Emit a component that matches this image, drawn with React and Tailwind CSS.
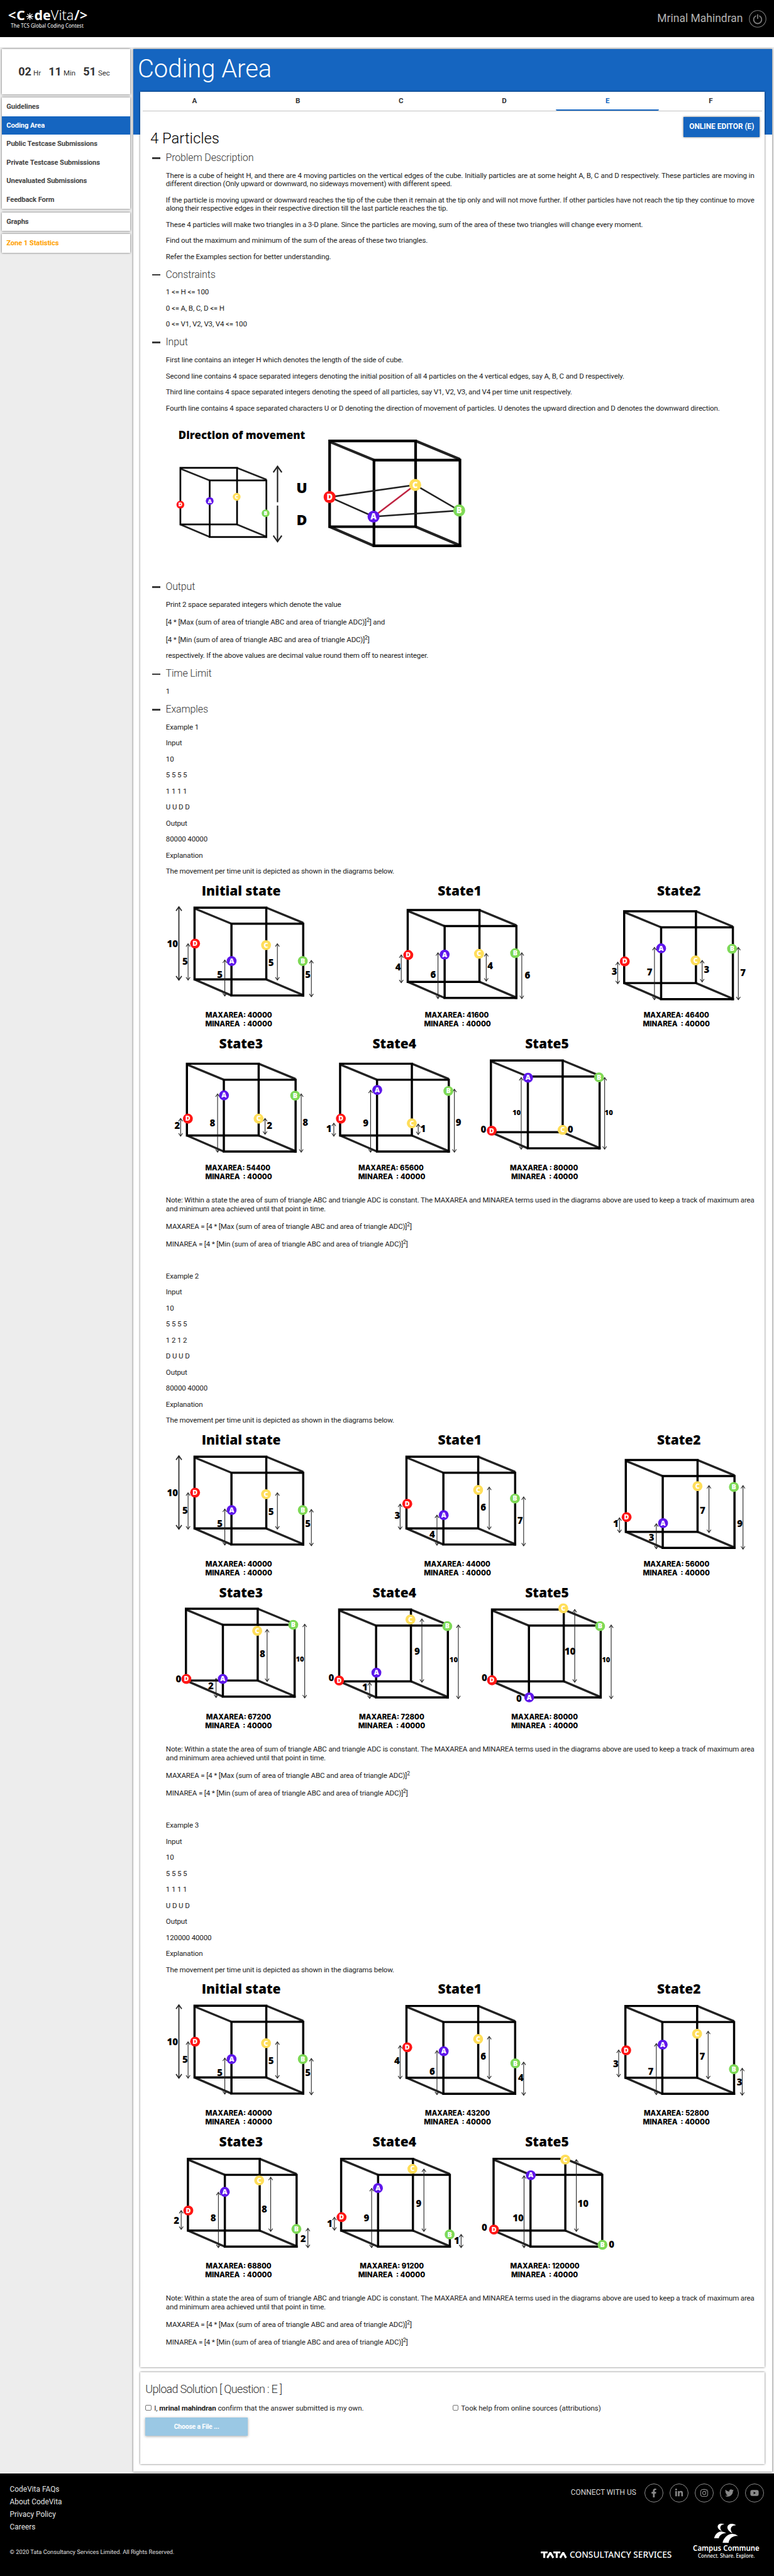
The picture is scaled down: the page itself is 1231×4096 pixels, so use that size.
import { FaFacebookF, FaLinkedinIn, FaInstagram, FaTwitter, FaYoutube } from "react-icons/fa";

const COLORS = { A: "#5e17eb", B: "#7ed957", C: "#ffde59", D: "#ff1616" };

/* ---------- diagrams ---------- */

function Cube({ x, y, w = 178, h = 178, dx = 91.6, dy = 39.8, sw = 5.4 }) {
  return (
    <g strokeWidth={sw} fill="none">
      <g stroke="#222">
        <path d={`M${x} ${y + 2}L${x + dx} ${y + dy}M${x + w} ${y}L${x + w + dx} ${y + dy - 2}`} />
        <path d={`M${x} ${y + h}L${x + dx} ${y + h + dy}M${x + w} ${y + h}L${x + w + dx} ${y + h + dy - 1}`} />
      </g>
      <path stroke="#000" d={`M${x} ${y + h}V${y}H${x + w}V${y + h}H${x - sw / 2}M${x - sw / 2} ${y}H${x + 2}`} />
      <path stroke="#000" d={`M${x + dx} ${y + dy}H${x + w + dx}V${y + h + dy}H${x + dx}V${y + dy - sw / 2}`} />
      <path stroke="#000" d={`M${x + w + dx - 4} ${y + h + dy}H${x + w + dx + sw / 2}`} />
    </g>
  );
}

function Marker({ id, x, y, r = 12.3 }) {
  return (
    <g>
      <circle cx={x} cy={y} r={r} fill={COLORS[id]} />
      <text x={x} y={y + r * 0.47} textAnchor="middle" fill="#fff" fontSize={r * 1.38} fontWeight="800">
        {id}
      </text>
    </g>
  );
}

function Arrow({ x, y1, y2, sw = 1.7, head = 5, up = true, down = true }) {
  return (
    <g stroke="#222" strokeWidth={sw} fill="none">
      <path d={`M${x} ${y1}V${y2}`} />
      {up && <path d={`M${x - head} ${y1 + head * 1.4}L${x} ${y1}L${x + head} ${y1 + head * 1.4}`} />}
      {down && <path d={`M${x - head} ${y2 - head * 1.4}L${x} ${y2}L${x + head} ${y2 - head * 1.4}`} />}
    </g>
  );
}

function Num({ x, y, size = 23.5, children }) {
  return (
    <text x={x} y={y + size * 0.357} textAnchor="middle" fontSize={size} fontWeight="800" fill="#000">
      {children}
    </text>
  );
}

function Area({ x1, x2, y, children }) {
  return (
    <text
      x={x1}
      y={y}
      textLength={x2 - x1}
      lengthAdjust="spacingAndGlyphs"
      fontSize="18"
      fontWeight="800"
      className="whitespace-pre font-['Inter',sans-serif]"
    >
      {children}
    </text>
  );
}

/* marks: [id, x, y, arrow [x, y1, y2] or null, label [x, y, text, size]] */
function State({ title, tx, o, marks, max, min, colon = ":", row }) {
  const ty = row === 0 ? 29.9 : 409.3;
  const ay = row === 0 ? 332.7 : 711.4;
  return (
    <g>
      <text x={tx} y={ty} textAnchor="middle" fontSize="32.6" fontWeight="800">
        {title}
      </text>
      <Cube x={o[0]} y={o[1]} />
      {marks.map(([id, x, y, a, l]) => (
        <g key={id}>
          {a && <Arrow x={a[0]} y1={a[1]} y2={a[2]} />}
          <Marker id={id} x={x} y={y} />
          <Num x={l[0]} y={l[1]} size={l[3]}>
            {l[2]}
          </Num>
        </g>
      ))}
      <Area x1={max[0]} x2={max[1]} y={ay}>{`MAXAREA${colon} ${max[2]}`}</Area>
      <Area x1={min[0]} x2={min[1]} y={ay + 20.9}>{"MINAREA  : 40000"}</Area>
    </g>
  );
}

const INITIAL = {
  title: "Initial state", tx: 186.6, o: [70.8, 59.6], row: 0,
  max: [97.9, 263.2, "40000"], min: [97.4, 263.4],
  marks: [
    ["D", 72.2, 148.7, [54.8, 149.2, 239.2], [47.5, 193, "5"]],
    ["A", 162.8, 192, [145.9, 189.5, 279], [133.8, 224.8, "5"]],
    ["C", 248.2, 152.6, [276.3, 149.2, 239.2], [260.8, 195.4, "5"]],
    ["B", 339.3, 192, [360.6, 190.4, 280.5], [351.9, 224.8, "5"]],
  ],
};

const FIG1 = [
  {
    title: "State1", tx: 728.3, o: [599.6, 65.6], row: 0, max: [642.2, 800.7, "41600"], min: [640.3, 806],
    marks: [
      ["D", 601, 177, [583.6, 177, 245.7], [575.8, 206.9, "4"]],
      ["A", 691.2, 176, [674.7, 171.5, 285], [662.6, 225.8, "6"]],
      ["C", 776.5, 174, [794.4, 173.5, 241.7], [804.1, 203.9, "4"]],
      ["B", 866.1, 172.5, [882.6, 171.5, 285], [896.7, 226.8, "6"]],
    ],
  },
  {
    title: "State2", tx: 1272.3, o: [1136.6, 68.6], row: 0, max: [1185, 1347.4, "46400"], min: [1183, 1348.9],
    marks: [
      ["D", 1138, 193, [1120.6, 194.9, 248.1], [1112.4, 217.8, "3"]],
      ["A", 1228.2, 160.6, [1211.7, 158.1, 287.9], [1199.6, 219.8, "7"]],
      ["C", 1313.5, 190.4, [1330, 190.4, 243.7], [1341.1, 213.8, "3"]],
      ["B", 1404.2, 161.6, [1419.7, 158.1, 287.9], [1431.3, 221.3, "7"]],
    ],
  },
  {
    title: "State3", tx: 186.1, o: [51.9, 446.6], row: 1, max: [97.4, 258.8, "54400"], min: [97.4, 263.2],
    marks: [
      ["D", 54.3, 582.9, [36.3, 582.4, 626.2], [28.1, 600.3, "2"]],
      ["A", 143.9, 525.2, [128, 521.7, 666], [115.3, 594.3, "8"]],
      ["C", 229.7, 582.9, [245.7, 582.4, 621.7], [256.9, 599.3, "2"]],
      ["B", 320.4, 525.7, [335.4, 521.7, 666], [345.6, 592.3, "8"]],
    ],
  },
  {
    title: "State4", tx: 566.6, o: [431.9, 446.6], row: 1, max: [477.4, 639.3, "65600"], min: [476.9, 643.2],
    marks: [
      ["D", 433.8, 582.9, [416.3, 594.3, 626.2], [404.2, 608.3, "1"]],
      ["A", 524, 511.8, [507.5, 512.3, 666], [495.4, 594.3, "9"]],
      ["C", 609.7, 594.3, [625.7, 596.3, 622.2], [637.9, 608.3, "1"]],
      ["B", 700.4, 514.3, [715.4, 509.8, 666], [725.6, 592.3, "9"]],
    ],
  },
  {
    title: "State5", tx: 945.1, o: [806, 438.6], row: 1, colon: " :", max: [853, 1022.2, "80000"], min: [856.4, 1022.2],
    marks: [
      ["D", 808, 612.7, null, [787.6, 609.8, "0"]],
      ["A", 898.1, 481.4, [881.2, 480.9, 658.5], [869.5, 568, "10", 17.6]],
      ["C", 983.9, 610.8, null, [1003.3, 609.3, "0"]],
      ["B", 1074.1, 480.4, [1088.1, 480.9, 658.5], [1098.3, 568, "10", 17.6]],
    ],
  },
];

const FIG2 = [
  {
    title: "State1", tx: 728.6, o: [596.5, 59.6], row: 0, max: [640.7, 804.7, "44000"], min: [639.8, 806.2],
    marks: [
      ["D", 598.5, 176.5, [580.8, 177.4, 240], [574, 205, "3"]],
      ["A", 688.9, 204.6, [672.2, 204.6, 279.2], [660.4, 251.6, "4"]],
      ["C", 774.3, 142, [801.8, 135.3, 240], [787.1, 185.7, "6"]],
      ["B", 865.6, 163.4, [887.2, 159.5, 280.7], [878.4, 217.7, "7"]],
    ],
  },
  {
    title: "State2", tx: 1272.3, o: [1140.6, 67.9], row: 0, max: [1184.8, 1347.9, "56000"], min: [1182.9, 1348.9],
    marks: [
      ["D", 1142.6, 209.4, [1124.9, 211.4, 247.7], [1116, 225.9, "1"]],
      ["A", 1233, 224.4, [1216.3, 225.9, 287.9], [1204.5, 259.3, "3"]],
      ["C", 1318.4, 132.8, [1346.9, 131.4, 247.7], [1331.2, 193.4, "7"]],
      ["B", 1408.7, 134.8, [1431.3, 131.4, 288.9], [1423.5, 225.4, "9"]],
    ],
  },
  {
    title: "State3", tx: 186.1, o: [49.5, 436.7], row: 1, max: [99.6, 260.7, "67200"], min: [96.9, 262.8],
    marks: [
      ["D", 50.5, 610.7, null, [30.9, 610.3, "0"]],
      ["A", 140.8, 610.7, [124.2, 609.8, 656.8], [111.4, 628.7, "2"]],
      ["C", 226.3, 491.5, [250.8, 488.1, 617.1], [239.1, 548.2, "8"]],
      ["B", 315.7, 476.5, [344.1, 475, 657.8], [332.4, 561.8, "10", 17.6]],
    ],
  },
  {
    title: "State4", tx: 566.4, o: [429.6, 438.7], row: 1, max: [478.7, 640.7, "72800"], min: [476.7, 642.9],
    marks: [
      ["D", 429.6, 614.6, null, [410, 607.4, "0"]],
      ["A", 521.9, 595.2, [505.2, 620, 659.2], [493.4, 630.6, "1"]],
      ["C", 606.4, 463.4, [634.8, 462, 619], [623.1, 541.4, "9"]],
      ["B", 697.7, 479.9, [725.2, 477, 659.7], [713.4, 563.7, "10", 17.6]],
    ],
  },
  {
    title: "State5", tx: 945.2, o: [808.7, 438.7], row: 1, max: [856.8, 1021.8, "80000"], min: [856.3, 1022],
    marks: [
      ["D", 808.7, 614.1, null, [790, 607.4, "0"]],
      ["A", 901, 656.3, null, [875.5, 659.2, "0"]],
      ["C", 985.5, 435.8, [1013.9, 438.7, 619], [1002.2, 541.4, "10"]],
      ["B", 1076.8, 479.9, [1104.3, 477, 659.7], [1091.5, 563.7, "10", 17.6]],
    ],
  },
];

const FIG3 = [
  {
    title: "State1", tx: 728.6, o: [596.5, 60.2], row: 0, max: [642.7, 803.8, "43200"], min: [639.8, 806.2],
    marks: [
      ["D", 598.5, 162.7, [580.8, 158.7, 240.8], [573, 195.5, "4"]],
      ["A", 688.9, 172.6, [672.2, 171.1, 280.1], [660.4, 222.4, "6"]],
      ["C", 774.3, 142.3, [801.8, 135.8, 240.8], [787.1, 185.6, "6"]],
      ["B", 866.6, 202.5, [887.2, 199.5, 281.6], [880.4, 237.3, "4"]],
    ],
  },
  {
    title: "State2", tx: 1272.3, o: [1139.6, 60.2], row: 0, max: [1185.3, 1346.9, "52800"], min: [1182.9, 1348.9],
    marks: [
      ["D", 1141.6, 170.1, [1122.9, 169.6, 235.8], [1116, 203.5, "3"]],
      ["A", 1232, 156.2, [1216.3, 153.7, 280.1], [1202.5, 222.4, "7"]],
      ["C", 1317.4, 129.3, [1344.9, 122.9, 240.8], [1330.2, 185.6, "7"]],
      ["B", 1408.7, 216.9, [1429.4, 214.9, 281.6], [1422.5, 249.2, "3"]],
    ],
  },
  {
    title: "State3", tx: 186.1, o: [54.4, 439.2], row: 1, max: [98.6, 261.6, "68800"], min: [96.9, 262.8],
    marks: [
      ["D", 55.4, 567.6, [37.7, 567.6, 614.3], [25.9, 591.4, "2"]],
      ["A", 145.8, 521.3, [130, 522.3, 659.6], [117.3, 586, "8"]],
      ["C", 231.2, 492.9, [259.7, 485, 619.3], [244, 564.6, "8"]],
      ["B", 323.5, 613.3, [352, 611.8, 659.6], [340.2, 636.7, "2"]],
    ],
  },
  {
    title: "State4", tx: 566.4, o: [434.5, 439.2], row: 1, max: [480.7, 639.8, "91200"], min: [476.7, 642.9],
    marks: [
      ["D", 435.5, 584, [417.8, 584.5, 616.3], [406, 599.4, "1"]],
      ["A", 525.8, 511.8, [510.1, 512.8, 659.6], [497.4, 586, "9"]],
      ["C", 611.3, 464.1, [639.8, 464.6, 619.3], [627, 549.2, "9"]],
      ["B", 703.6, 626.8, [732.1, 626.8, 659.6], [721.3, 641.2, "1"]],
    ],
  },
  {
    title: "State5", tx: 945.2, o: [812.6, 439.2], row: 1, max: [853.9, 1025.7, "120000"], min: [856.3, 1022],
    marks: [
      ["D", 813.6, 614.8, null, [790, 608.9, "0"]],
      ["A", 904.9, 480, [888.2, 481.5, 659.6], [873.5, 586, "10"]],
      ["C", 990.4, 441.2, [1017.9, 441.2, 619.3], [1034.6, 549.2, "10"]],
      ["B", 1082.7, 652.6, null, [1105.3, 650.6, "0"]],
    ],
  },
];

function StatesFigure({ states }) {
  return (
    <svg viewBox="0 0 1460 757" className="block h-[485.4px] w-[936.1px] shrink-0 overflow-visible font-['Open_Sans',sans-serif] tracking-normal">
      <State {...INITIAL} />
      <Arrow x={32} y1={57.6} y2={239.2} sw={2.6} head={7} />
      <Num x={16} y={149.7}>10</Num>
      {states.map((s) => (
        <State key={s.title} {...s} />
      ))}
    </svg>
  );
}

function DirectionFigure() {
  return (
    <svg viewBox="0 0 1460 378.5" className="mt-[0.8px] block h-[242.7px] w-[936.1px] shrink-0 overflow-visible font-['Open_Sans',sans-serif] tracking-normal">
      <text x="31" y="45" fontSize="26.2" fontWeight="800" textLength="314" lengthAdjust="spacingAndGlyphs">
        Direction of movement
      </text>
      <Cube x={35.7} y={116.9} w={140.6} h={140.3} dx={72.7} dy={31.1} sw={4.2} />
      <Marker id="D" x={35.7} y={208.2} r={9.7} />
      <Marker id="A" x={108.4} y={199} r={9.7} />
      <Marker id="C" x={175.3} y={188.8} r={9.7} />
      <Marker id="B" x={247.1} y={229.6} r={9.7} />
      <Arrow x={276.7} y1={113.3} y2={202.1} sw={3.4} head={10.5} down={false} />
      <Arrow x={276.7} y1={210.3} y2={299.6} sw={3.4} head={10.5} up={false} />
      <Num x={337} y={166.4} size={36}>U</Num>
      <Num x={337} y={245.5} size={36}>D</Num>
      <Cube x={405.9} y={50} w={213.3} h={212.8} dx={110} dy={47.5} sw={6.6} />
      <g stroke="#222" strokeWidth="4" fill="none">
        <path d="M618.2 159.2L405.9 189.3L514.9 237.8L727.3 222.5Z" />
        <path d="M618.2 159.2L514.9 237.8" stroke="#bf2441" />
      </g>
      <Marker id="D" x={405.9} y={189.3} r={14.9} />
      <Marker id="C" x={618.2} y={159.2} r={14.9} />
      <Marker id="A" x={514.9} y={237.8} r={14.9} />
      <Marker id="B" x={727.3} y={222.5} r={14.9} />
    </svg>
  );
}

/* ---------- text blocks ---------- */

function Heading({ children }) {
  return (
    <div className="mt-[0.5px] -ml-[21.4px] flex items-center gap-2">
      <span className="h-[2.6px] w-[13px] bg-[#3a3a3a]" />
      <h3 className="text-[16px] leading-[18.7px] font-light text-[#333]">{children}</h3>
    </div>
  );
}

function P({ children }) {
  return <p>{children}</p>;
}

/* Multi-line paragraph, justified to both margins */
function Block({ children }) {
  return <p className="text-justify tracking-[-0.156px]">{children}</p>;
}

function Formula({ pre = "", kind, close = "]", post = "" }) {
  return (
    <p className="pt-[2.6px]">
      {pre}[4 * [{kind} (sum of area of triangle ABC and area of triangle ADC)]<sup>2</sup>
      {close}
      {post}
    </p>
  );
}

const EXAMPLES = [
  { n: 1, v: "1 1 1 1", d: "U U D D", out: "80000 40000", fig: FIG1 },
  { n: 2, v: "1 2 1 2", d: "D U U D", out: "80000 40000", fig: FIG2 },
  { n: 3, v: "1 1 1 1", d: "U D U D", out: "120000 40000", fig: FIG3 },
];

function Example({ n, v, d, out, fig }) {
  return (
    <section className="flex flex-col gap-3">
      {["Example " + n, "Input", "10", "5 5 5 5", v, d, "Output", out, "Explanation", "The movement per time unit is depicted as shown in the diagrams below."].map(
        (t, i) => (
          <P key={i}>{t}</P>
        )
      )}
      <StatesFigure states={fig} />
      <Block>
        Note: Within a state the area of sum of triangle ABC and triangle ADC is constant. The MAXAREA and MINAREA terms
        used in the diagrams above are used to keep a track of maximum area and minimum area achieved until that point in
        time.
      </Block>
      <Formula pre="MAXAREA = " kind="Max" close={n === 2 ? "" : "]"} />
      <Formula pre="MINAREA = " kind="Min" />
    </section>
  );
}

/* ---------- page chrome ---------- */

const SHADOW = "shadow-[0_0_3px_rgba(0,0,0,0.6)]";

function Logo() {
  return (
    <svg viewBox="0 0 240 92" className="h-[59px] w-[154px] font-['Noto_Sans',sans-serif]" fill="#fff">
      <g fontSize="33">
        <text x="20" y="49.5" fontWeight="600" textLength="20" lengthAdjust="spacingAndGlyphs">&lt;</text>
        <text x="41" y="49.5" fontWeight="700" textLength="21" lengthAdjust="spacingAndGlyphs">C</text>
        <text x="85" y="49.5" fontWeight="700" textLength="41" lengthAdjust="spacingAndGlyphs">de</text>
        <text x="126" y="49.5" fontWeight="300" textLength="57" lengthAdjust="spacingAndGlyphs">Vita</text>
        <text x="184" y="49.5" fontWeight="600" textLength="33" lengthAdjust="spacingAndGlyphs">/&gt;</text>
      </g>
      <g stroke="#fff" strokeWidth="2" strokeLinecap="round">
        <path d="M74 33V49M66 41H82M68.3 35.3L79.7 46.7M79.7 35.3L68.3 46.7" />
      </g>
      <text x="27" y="68.5" fontSize="14.5" textLength="180" lengthAdjust="spacingAndGlyphs">
        The TCS Global Coding Contest
      </text>
    </svg>
  );
}

function Header() {
  return (
    <header className="flex h-[59px] items-center justify-between bg-black pr-[12.5px]">
      <Logo />
      <div className="flex items-center gap-[9px]">
        <span className="text-[17.5px] text-[#b3b3b3]">Mrinal Mahindran</span>
        <svg viewBox="0 0 44 44" className="size-7" fill="none" stroke="#7d7d7d">
          <circle cx="22" cy="22" r="20.8" strokeWidth="1.7" />
          <path d="M17.2 15A10 10 0 1 0 26.8 15" strokeWidth="2.8" strokeLinecap="round" />
          <path d="M22 11.5V21" strokeWidth="2.8" strokeLinecap="round" />
        </svg>
      </div>
    </header>
  );
}

function Time({ value, unit }) {
  return (
    <div className="flex items-baseline gap-[3px]">
      <span className="text-lg font-bold">{value}</span>
      <span className="text-[11.5px]">{unit}</span>
    </div>
  );
}

const MENU = ["Guidelines", "Coding Area", "Public Testcase Submissions", "Private Testcase Submissions", "Unevaluated Submissions", "Feedback Form"];

function Sidebar() {
  return (
    <aside className="flex w-[204.6px] shrink-0 flex-col gap-[5.3px] text-[11.2px] font-bold tracking-[-0.1px] text-[#444]">
      <div className={`flex h-[72.6px] items-center gap-[12.2px] bg-white pl-[26.6px] font-normal tracking-normal text-[#333] ${SHADOW}`}>
        <Time value="02" unit="Hr" />
        <Time value="11" unit="Min" />
        <Time value="51" unit="Sec" />
      </div>
      <nav className={`bg-white ${SHADOW}`}>
        {MENU.map((m) => (
          <div
            key={m}
            className={`flex h-[29.5px] items-center pt-px pl-[7.6px] ${m === "Coding Area" ? "bg-[#1565c0] text-white" : ""}`}
          >
            {m}
          </div>
        ))}
      </nav>
      <div className={`flex h-[29.5px] items-center bg-white pt-px pl-[7.6px] ${SHADOW}`}>Graphs</div>
      <div className={`flex h-[29.5px] items-center bg-white pt-px pl-[7.6px] text-[#ffa000] ${SHADOW}`}>Zone 1 Statistics</div>
    </aside>
  );
}

function Tabs() {
  return (
    <div className="mx-[3.9px] grid h-[31px] grid-cols-6 border-b border-[#c4c4c4] text-[11.5px] font-bold text-[#333]">
      {["A", "B", "C", "D", "E", "F"].map((t) => (
        <div
          key={t}
          className={`flex items-center justify-center pt-[3px] ${t === "E" ? "rounded-xs border-b-[2.6px] border-[#1565c0] text-[#1565c0]" : "pb-[2.6px]"}`}
        >
          {t}
        </div>
      ))}
    </div>
  );
}

function Question() {
  return (
    <div className={`h-[3618.5px] bg-white ${SHADOW}`}>
      <Tabs />
      <div className="mt-[9px] flex items-start justify-between pr-2 pl-[15.6px]">
        <h2 className="mt-[20px] text-[23.8px] leading-[28px] font-light text-black">4 Particles</h2>
        <button className={`h-[32.4px] w-[121px] bg-[#1565c0] text-[11.9px] font-bold text-white ${SHADOW}`}>ONLINE EDITOR (E)</button>
      </div>
      <div className="mt-2 flex flex-col gap-3 pr-[16.7px] pl-[40.4px] text-[11.54px] leading-[13.5px] tracking-[-0.134px] text-[#212121]">
        <Heading>Problem Description</Heading>
        <Block>
          There is a cube of height H, and there are 4 moving particles on the vertical edges of the cube. Initially
          particles are at some height A, B, C and D respectively. These particles are moving in different direction
          (Only upward or downward, no sideways movement) with different speed.
        </Block>
        <Block>
          If the particle is moving upward or downward reaches the tip of the cube then it remain at the tip only and
          will not move further. If other particles have not reach the tip they continue to move along their respective
          edges in their respective direction till the last particle reaches the tip.
        </Block>
        <P>These 4 particles will make two triangles in a 3-D plane. Since the particles are moving, sum of the area of these two triangles will change every moment.</P>
        <P>Find out the maximum and minimum of the sum of the areas of these two triangles.</P>
        <P>Refer the Examples section for better understanding.</P>
        <Heading>Constraints</Heading>
        <P>1 &lt;= H &lt;= 100</P>
        <P>0 &lt;= A, B, C, D &lt;= H</P>
        <P>0 &lt;= V1, V2, V3, V4 &lt;= 100</P>
        <Heading>Input</Heading>
        <P>First line contains an integer H which denotes the length of the side of cube.</P>
        <P>Second line contains 4 space separated integers denoting the initial position of all 4 particles on the 4 vertical edges, say A, B, C and D respectively.</P>
        <P>Third line contains 4 space separated integers denoting the speed of all particles, say V1, V2, V3, and V4 per time unit respectively.</P>
        <P>Fourth line contains 4 space separated characters U or D denoting the direction of movement of particles. U denotes the upward direction and D denotes the downward direction.</P>
        <DirectionFigure />
        <Heading>Output</Heading>
        <P>Print 2 space separated integers which denote the value</P>
        <Formula kind="Max" post=" and" />
        <Formula kind="Min" />
        <P>respectively. If the above values are decimal value round them off to nearest integer.</P>
        <Heading>Time Limit</Heading>
        <P>1</P>
        <Heading>Examples</Heading>
        <div className="flex flex-col gap-[37.5px]">
          {EXAMPLES.map((e) => (
            <Example key={e.n} {...e} />
          ))}
        </div>
      </div>
    </div>
  );
}

function Check({ children }) {
  return (
    <label className="flex w-[488.2px] items-center gap-[4.4px]">
      <span className="size-[9.4px] rounded-[2px] border border-[#767676] bg-white" />
      <span>{children}</span>
    </label>
  );
}

function Upload() {
  return (
    <div className={`mt-2 h-[146px] bg-white pt-[16.3px] pl-[7.9px] ${SHADOW}`}>
      <h3 className="text-lg leading-[21px] font-light tracking-[-0.7px] text-[#333]">Upload Solution [ Question : E ]</h3>
      <div className="mt-[12.5px] flex text-[11.54px] leading-[14px] tracking-[-0.05px] text-[#212121]">
        <Check>
          I, <b>mrinal mahindran</b> confirm that the answer submitted is my own.
        </Check>
        <Check>Took help from online sources (attributions)</Check>
      </div>
      <button className="mt-[8.4px] h-[29.2px] w-[162.6px] bg-[#9ac8e4] text-[10.4px] font-bold tracking-[-0.15px] text-white shadow-[0_1px_4px_rgba(0,0,0,0.35)]">
        Choose a File ...
      </button>
    </div>
  );
}

function Social({ Icon }) {
  return (
    <span className="flex size-[30px] items-center justify-center rounded-full border border-[#8a8a8a]">
      <Icon className="size-3.5" />
    </span>
  );
}

function FooterLogos() {
  return (
    <svg viewBox="1330 6245 570 110" className="h-[70.5px] w-[365.5px] font-['Noto_Sans',sans-serif]" fill="#fff">
      <g stroke="#fff" strokeWidth="5" fill="none">
        <path d="M1341 6328.5H1358M1349.5 6328V6342M1372 6328.5H1389.5M1380.5 6328V6342" />
        <path d="M1357 6342L1364.5 6329L1372 6342M1389 6342L1396.5 6329L1403.5 6342" strokeLinejoin="bevel" />
      </g>
      <text x="1412.5" y="6342" fontSize="22" fontWeight="500" textLength="253.5" lengthAdjust="spacingAndGlyphs">
        CONSULTANCY SERVICES
      </text>
      <g transform="translate(1320 6140) scale(.3827 .3333)">
        <path d="M1243 355C1200 338 1183 388 1230 407C1210 385 1218 358 1243 357Z" />
        <path d="M1318 361C1278 332 1232 382 1298 424C1275 390 1290 362 1318 364Z" />
        <path d="M1179 460C1185 425 1215 390 1257 422C1230 422 1212 440 1209 460Z" />
        <path d="M1234 494C1238 455 1285 400 1335 444C1300 438 1275 465 1273 494Z" />
      </g>
      <text x="1718.5" y="6324" fontSize="18.5" fontWeight="600" textLength="165" lengthAdjust="spacingAndGlyphs">
        Campus Commune
      </text>
      <text x="1731" y="6342" fontSize="13" fontWeight="500" textLength="141" lengthAdjust="spacingAndGlyphs">
        Connect. Share. Explore.
      </text>
    </svg>
  );
}

function Footer() {
  return (
    <footer className="flex h-[163.5px] justify-between bg-black pr-[12.8px] pl-[15.6px] text-[11.9px] text-[#e0e0e0]">
      <div className="flex flex-col pt-[15px]">
        {["CodeVita FAQs", "About CodeVita", "Privacy Policy", "Careers"].map((t) => (
          <a key={t} className="leading-5">
            {t}
          </a>
        ))}
        <p className="mt-[22px] text-[9.3px] leading-4">© 2020 Tata Consultancy Services Limited. All Rights Reserved.</p>
      </div>
      <div className="flex flex-col items-end justify-between pt-4 pb-[20.5px]">
        <div className="flex items-center gap-2.5 pr-[3.5px] text-[#8a8a8a]">
          <span className="pr-[3px] text-[#d5d5d5]">CONNECT WITH US</span>
          <Social Icon={FaFacebookF} />
          <Social Icon={FaLinkedinIn} />
          <Social Icon={FaInstagram} />
          <Social Icon={FaTwitter} />
          <Social Icon={FaYoutube} />
        </div>
        <FooterLogos />
      </div>
    </footer>
  );
}

export default function App() {
  return (
    <div className="h-[4096px] w-[1231px] overflow-hidden bg-white font-['Roboto',sans-serif]">
      <Header />
      <div className="mt-4 flex h-[3857.5px] items-start gap-[4.4px] bg-[#ededed] pt-[2.5px] pl-[2.7px]">
        <Sidebar />
        <main className={`h-[3852.5px] w-[1016.5px] bg-[linear-gradient(#1565c0_136px,#fff_136px)] px-[11.8px] ${SHADOW}`}>
          <h1 className="-ml-[4.5px] h-[68px] pt-[9px] text-[39.9px] leading-[46.4px] font-light text-white">Coding Area</h1>
          <Question />
          <Upload />
        </main>
      </div>
      <Footer />
    </div>
  );
}
